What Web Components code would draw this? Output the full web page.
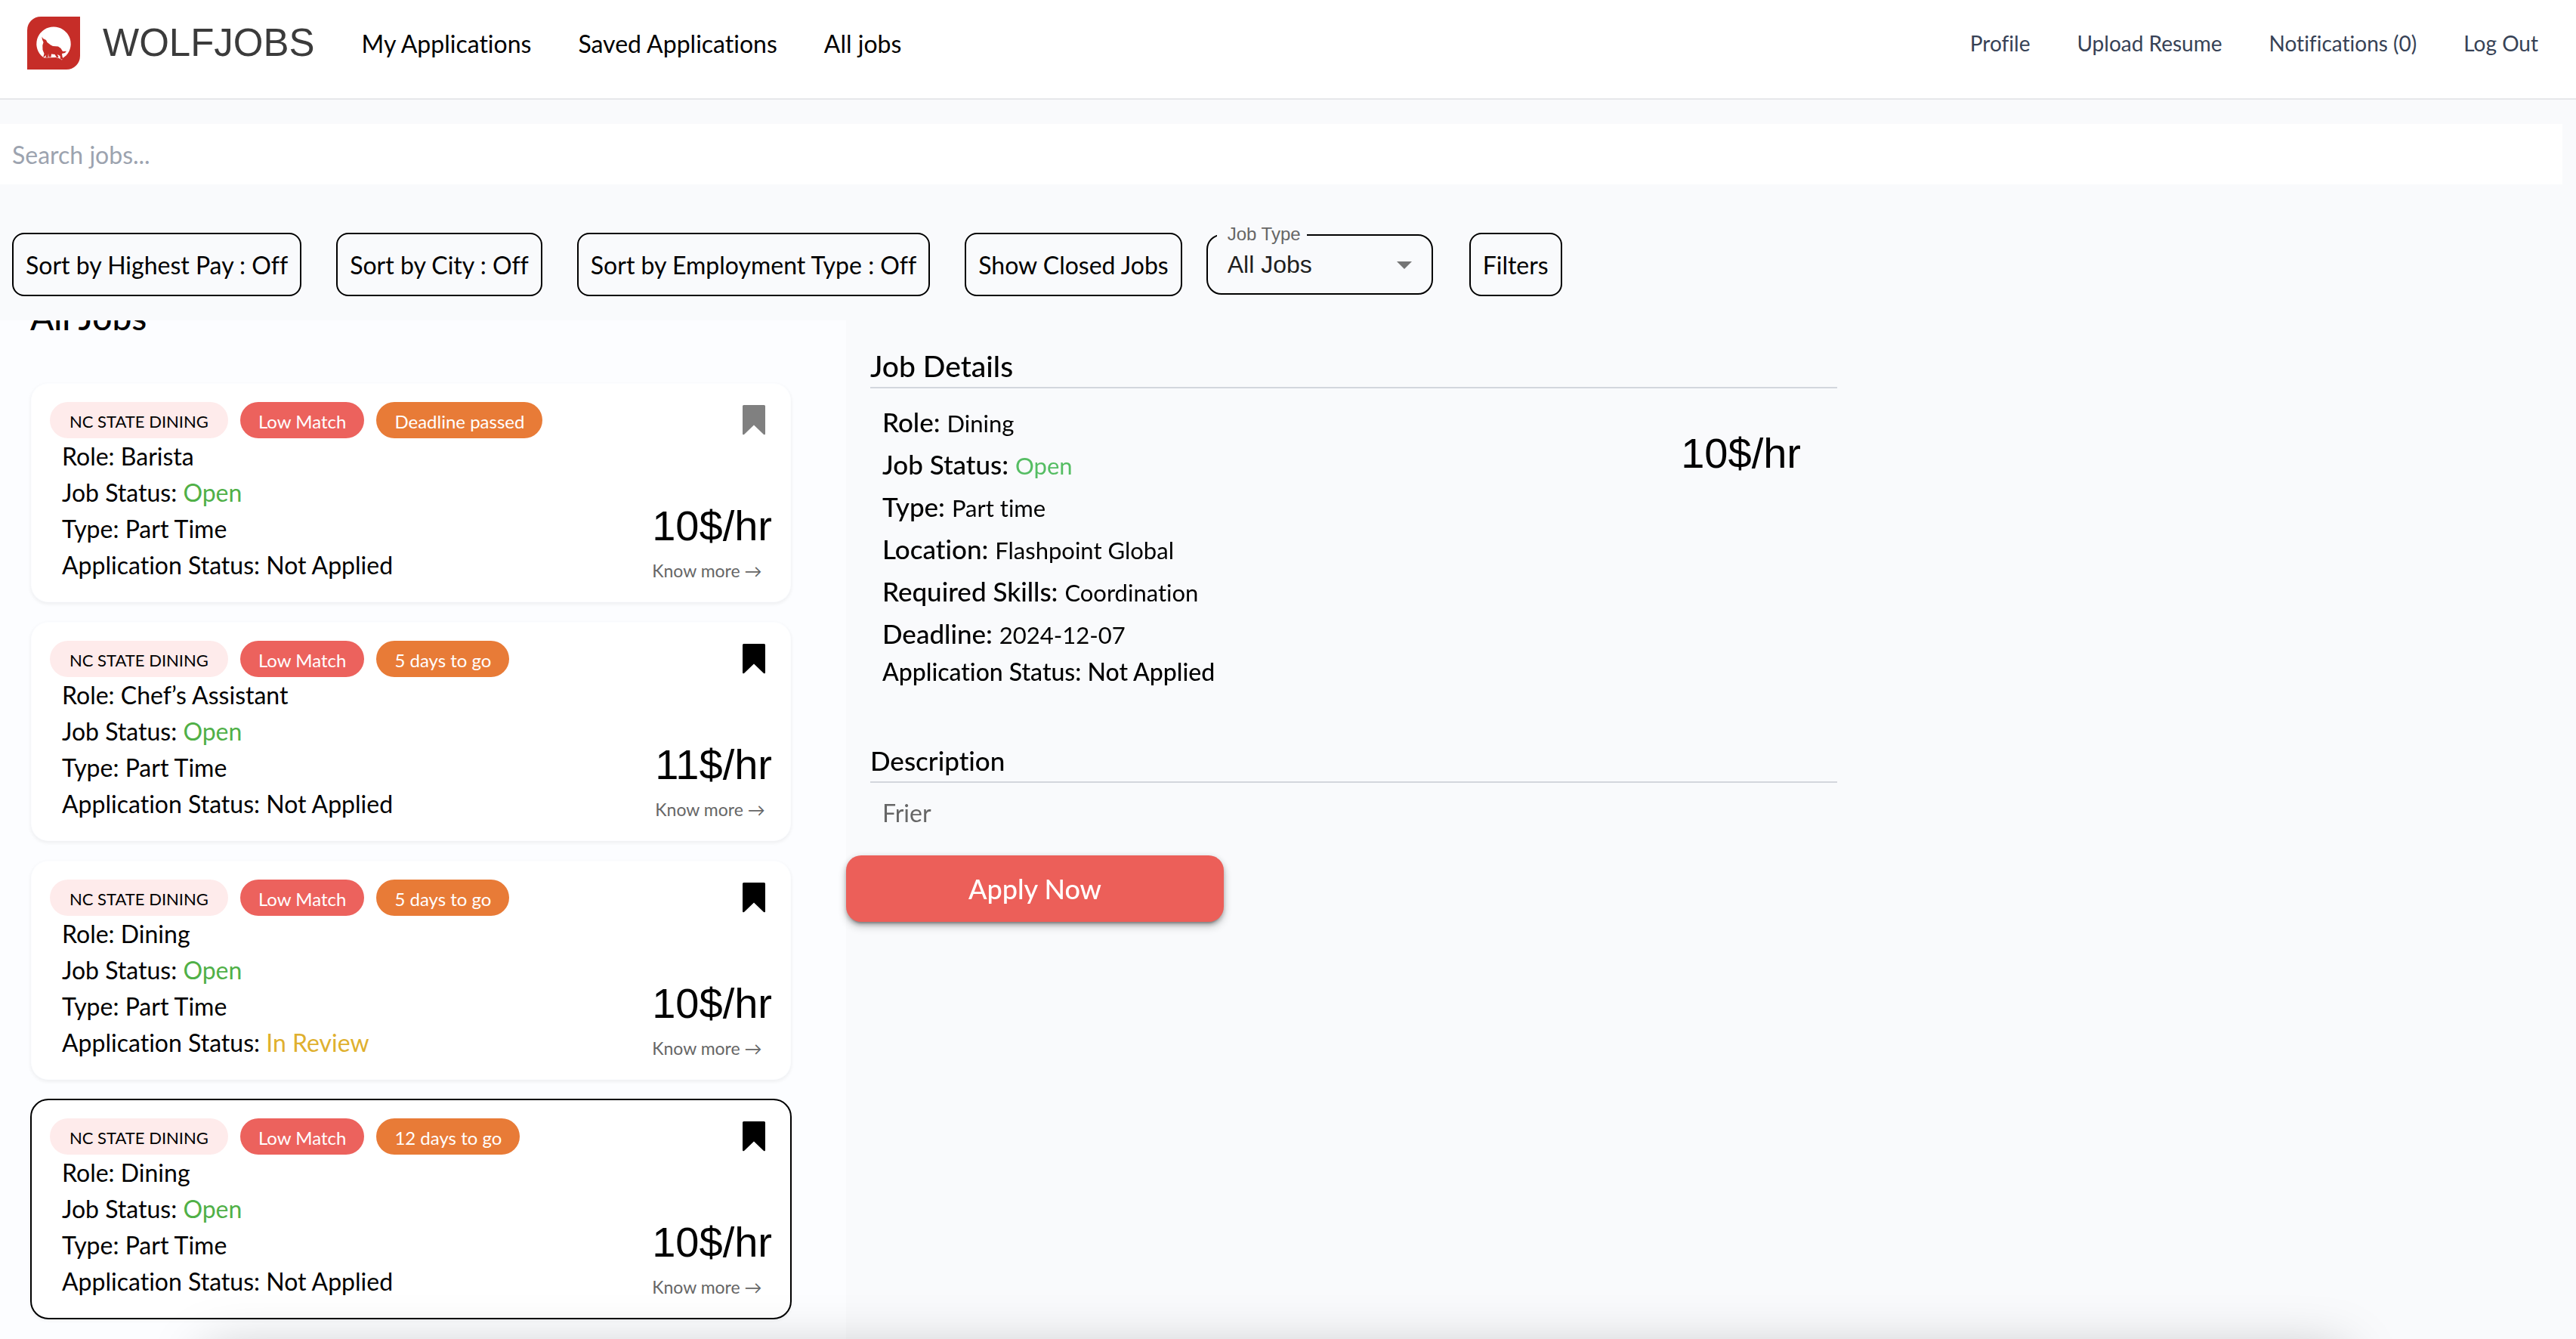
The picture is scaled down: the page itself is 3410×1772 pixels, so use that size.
<!DOCTYPE html>
<html lang="en">
<head>
<meta charset="utf-8">
<title>WolfJobs</title>
<style>
  html, body { margin: 0; height: 100%; }
  body { font-family: Lato, "Liberation Sans", sans-serif; font-size: 32px; font-variant-ligatures: none; color: #000; background: #f9fafc; overflow: hidden; }
</style>
</head>
<body>
<wolf-app></wolf-app>

<script>
const define = (name, html, setup) => {
  const template = document.createElement('template');
  template.innerHTML = html;
  customElements.define(name, class extends HTMLElement {
    connectedCallback() {
      if (this.shadowRoot) return;
      const root = this.attachShadow({ mode: 'open' });
      root.append(template.content.cloneNode(true));
      if (setup) setup(this, root);
    }
  });
};

define('wolf-logo', `
  <style>
    :host { display: flex; align-items: center; gap: 30px; }
    svg { width: 70px; height: 70px; display: block; }
    span { font: 51px/70px "Liberation Sans", Arial, sans-serif; color: #3b3b3b; }
  </style>
  <svg viewBox="0 0 70 70" aria-hidden="true">
    <path fill="#c62d28" d="M18 0H70V52A18 18 0 0 1 52 70H0V18A18 18 0 0 1 18 0Z"/>
    <path fill="#fff" d="M35 13.5A22.5 22.5 0 0 1 51.500 51.500L47 55L46 57.500L42 55L38 54L22 54.500L18.500 51.500A22.500 22.500 0 0 1 35 13.500Z"/>
    <path fill="#c62d28" d="M19.500 26.500L21 29L25 31L26.500 34L31 37.500L34 39L41 39.500L44.500 42L47 46L52 45.800L50 48L46 49L46.500 53L48 56.500L44 56.500L43.500 52L40 50L41.500 54L39 54L36.500 50L32 49.500L31.500 53.500H28.500L28 48.500L27.500 54H24.500L25 51L21 54.500L22.500 49L20.500 44L20.300 38L21.500 34L19.800 30Z"/>
  </svg>
  <span>WOLFJOBS</span>
`);

define('nav-link', `
  <style>
    :host { display: block; }
    a { color: inherit; text-decoration: none; white-space: nowrap; }
  </style>
  <a href="#"><slot></slot></a>
`);

define('site-header', `
  <style>
    :host { display: flex; align-items: center; justify-content: space-between; padding: 22px 50px 38px 36px; background: #fff; border-bottom: 2px solid #e6e7ea; }
    nav { display: flex; align-items: center; gap: 62px; }
    .left { display: flex; align-items: center; gap: 62px; }
    .account { font-size: 28px; color: #374256; }
  </style>
  <div class="left">
    <wolf-logo></wolf-logo>
    <nav aria-label="Jobs">
      <nav-link>My Applications</nav-link>
      <nav-link>Saved Applications</nav-link>
      <nav-link>All jobs</nav-link>
    </nav>
  </div>
  <nav class="account" aria-label="Account">
    <nav-link>Profile</nav-link>
    <nav-link>Upload Resume</nav-link>
    <nav-link>Notifications (0)</nav-link>
    <nav-link>Log Out</nav-link>
  </nav>
`);

define('search-bar', `
  <style>
    :host { display: block; margin: 32px 18px 0 0; }
    input { display: block; box-sizing: border-box; width: 100%; height: 80px; padding: 0 16px; border: 0; background: #fff; font: inherit; color: #000; }
    input::placeholder { color: #9ca3af; opacity: 1; }
  </style>
  <input type="text" placeholder="Search jobs..." aria-label="Search jobs">
`);

define('outline-button', `
  <style>
    :host { display: block; }
    button { display: block; height: 84px; padding: 0 16px; border: 2px solid #000; border-radius: 16px; background: transparent; font: inherit; color: #000; white-space: nowrap; }
  </style>
  <button type="button"><slot></slot></button>
`);

define('job-type-select', `
  <style>
    :host { display: block; position: relative; box-sizing: border-box; width: 300px; height: 80px; border: 2px solid #000; border-radius: 20px; font-family: "Liberation Sans", Arial, sans-serif; }
    select { width: 100%; height: 100%; padding: 0 0 0 26px; border: 0; background: transparent; appearance: none; font: 32px "Liberation Sans", Arial, sans-serif; color: #1f1f1f; }
    label { position: absolute; top: -16px; left: 12px; padding: 0 8px 0 14px; background: #f9fafc; font-size: 24px; line-height: 28px; color: #666; }
    svg { position: absolute; top: 34px; right: 26px; width: 20px; height: 10px; pointer-events: none; }
  </style>
  <select id="type"><option>All Jobs</option><option>Full Time</option><option>Part Time</option></select>
  <label for="type">Job Type</label>
  <svg viewBox="0 0 20 10" aria-hidden="true"><path fill="#757575" d="M0 0H20L10 10Z"/></svg>
`);

define('filter-bar', `
  <style>
    :host { display: flex; align-items: center; gap: 32px; padding: 64px 16px 32px; }
    div { display: flex; gap: 46px; }
    outline-button.end { margin-left: 16px; }
  </style>
  <div>
    <outline-button>Sort by Highest Pay : Off</outline-button>
    <outline-button>Sort by City : Off</outline-button>
    <outline-button>Sort by Employment Type : Off</outline-button>
    <outline-button>Show Closed Jobs</outline-button>
  </div>
  <job-type-select></job-type-select>
  <outline-button class="end">Filters</outline-button>
`);

define('tag-pill', `
  <style>
    :host { display: block; box-sizing: border-box; height: 48px; padding: 3px 24px 0; border-radius: 24px; font-size: 24px; line-height: 45px; color: #fff; background: #ec625d; white-space: nowrap; }
    :host([kind="org"]) { padding: 3px 26px 0; font-size: 22px; color: #000; background: #feebeb; }
    :host([kind="due"]) { background: #e87b37; }
  </style>
  <slot></slot>
`);

define('bookmark-toggle', `
  <style>
    :host { display: block; color: #000; }
    :host([off]) { color: #808080; }
    button { display: block; padding: 4px 9px; border: 0; background: none; color: inherit; }
    svg { display: block; width: 30px; height: 40px; }
  </style>
  <button type="button" aria-label="Save job">
    <svg viewBox="0 0 30 40" aria-hidden="true"><path fill="currentColor" d="M1.500 0H28.500Q30 0 30 1.500V38Q30 40 28 39L15 26.500L2 39Q0 40 0 38V1.500Q0 0 1.500 0Z"/></svg>
  </button>
`);

define('job-card', `
  <style>
    :host { display: block; padding: 24px; border: 2px solid transparent; border-radius: 24px; background: #fff padding-box; box-shadow: 0 2px 4px rgba(0,0,0,.05); }
    :host([selected]) { border-color: #000; }
    header, .tags, .body { display: flex; }
    header, .body { justify-content: space-between; }
    .tags { gap: 16px; }
    .body { align-items: flex-end; }
    .facts { padding-left: 16px; line-height: 48px; }
    .open { color: #50b047; }
    .review { color: #dfb02e; }
    .price { font: 56px/84px "Liberation Sans", Arial, sans-serif; text-align: right; }
    a { display: block; font-size: 23px; line-height: 34px; color: #666; text-decoration: none; }
  </style>
  <header>
    <div class="tags">
      <tag-pill kind="org">NC STATE DINING</tag-pill>
      <tag-pill>Low Match</tag-pill>
      <tag-pill kind="due"><slot name="due"></slot></tag-pill>
    </div>
    <bookmark-toggle></bookmark-toggle>
  </header>
  <div class="body">
    <div class="facts">
      <div>Role: <slot name="role"></slot></div>
      <div>Job Status: <span class="open">Open</span></div>
      <div>Type: Part Time</div>
      <div>Application Status: <span id="status"><slot name="status">Not Applied</slot></span></div>
    </div>
    <div>
      <div class="price"><slot name="pay"></slot>$/hr</div>
      <a href="#">Know more →</a>
    </div>
  </div>
`, (host, root) => {
  if (host.hasAttribute('unsaved')) root.querySelector('bookmark-toggle').setAttribute('off', '');
  if (host.hasAttribute('review')) root.getElementById('status').className = 'review';
});

define('job-list', `
  <style>
    :host { display: block; box-sizing: border-box; flex: 0 0 1120px; padding: 32px 72px 32px 40px; background: #fcfdff; overflow-y: auto; scrollbar-width: none; }
    h1 { margin: 0 0 62px; font-size: 46px; line-height: 48px; font-weight: 500; }
    .cards { display: flex; flex-direction: column; gap: 24px; }
  </style>
  <h1>All Jobs</h1>
  <div class="cards">
    <job-card unsaved><span slot="due">Deadline passed</span><span slot="role">Barista</span><span slot="pay">10</span></job-card>
    <job-card><span slot="due">5 days to go</span><span slot="role">Chef’s Assistant</span><span slot="pay">11</span></job-card>
    <job-card review><span slot="due">5 days to go</span><span slot="role">Dining</span><span slot="pay">10</span><span slot="status">In Review</span></job-card>
    <job-card selected><span slot="due">12 days to go</span><span slot="role">Dining</span><span slot="pay">10</span></job-card>
  </div>
`, host => { host.scrollTop = 60; });

define('job-detail', `
  <style>
    :host { display: block; flex: 1; min-width: 0; }
    section { max-width: 1280px; margin-left: 32px; }
    h2, h3 { margin: 0; font-weight: 500; line-height: 56px; border-bottom: 2px solid #d3d6dd; }
    h2 { margin-top: 32px; font-size: 39px; }
    h3 { margin-top: 66px; font-size: 35px; }
    .summary { display: flex; justify-content: space-between; align-items: flex-start; padding: 16px 48px 0 16px; }
    dl { margin: 0; }
    dl div { font-size: 35px; line-height: 56px; height: 56px; }
    dt, dd { display: inline; margin: 0; }
    dt { font-weight: 500; }
    dd { font-size: 31px; }
    dl .status { height: 46px; font-size: 32px; line-height: 46px; }
    .status dd { font-size: 32px; font-weight: 500; }
    .open { color: #55bd63; }
    .price { margin-top: 28px; font: 56px/84px "Liberation Sans", Arial, sans-serif; }
    p { margin: 0; padding: 16px 16px 32px; line-height: 48px; color: #666; }
    button { display: block; width: 500px; height: 88px; border: 0; border-radius: 20px; background: #ec5f59; color: #fff; font: 500 36px Lato, sans-serif; box-shadow: 0 6px 2px -4px rgba(0,0,0,.2), 0 4px 4px rgba(0,0,0,.14), 0 2px 10px rgba(0,0,0,.12), 0 6px 12px rgba(0,0,0,.2); }
  </style>
  <section>
    <h2>Job Details</h2>
    <div class="summary">
      <dl>
        <div><dt>Role:</dt> <dd>Dining</dd></div>
        <div><dt>Job Status:</dt> <dd class="open">Open</dd></div>
        <div><dt>Type:</dt> <dd>Part time</dd></div>
        <div><dt>Location:</dt> <dd>Flashpoint Global</dd></div>
        <div><dt>Required Skills:</dt> <dd>Coordination</dd></div>
        <div><dt>Deadline:</dt> <dd>2024-12-07</dd></div>
        <div class="status"><dt>Application Status:</dt> <dd>Not Applied</dd></div>
      </dl>
      <div class="price">10$/hr</div>
    </div>
    <h3>Description</h3>
    <p>Frier</p>
  </section>
  <button type="button">Apply Now</button>
`);

define('wolf-app', `
  <style>
    :host { position: relative; display: flex; flex-direction: column; height: 100vh; overflow: hidden; }
    main { flex: 1; min-height: 0; display: flex; }
    .shade { position: absolute; left: 8%; right: 9%; top: calc(100% + 18px); height: 100px; box-shadow: 0 0 72px rgba(0,0,0,.25); pointer-events: none; }
  </style>
  <site-header></site-header>
  <search-bar></search-bar>
  <filter-bar></filter-bar>
  <main>
    <job-list></job-list>
    <job-detail></job-detail>
  </main>
  <div class="shade"></div>
`);
</script>
</body>
</html>
